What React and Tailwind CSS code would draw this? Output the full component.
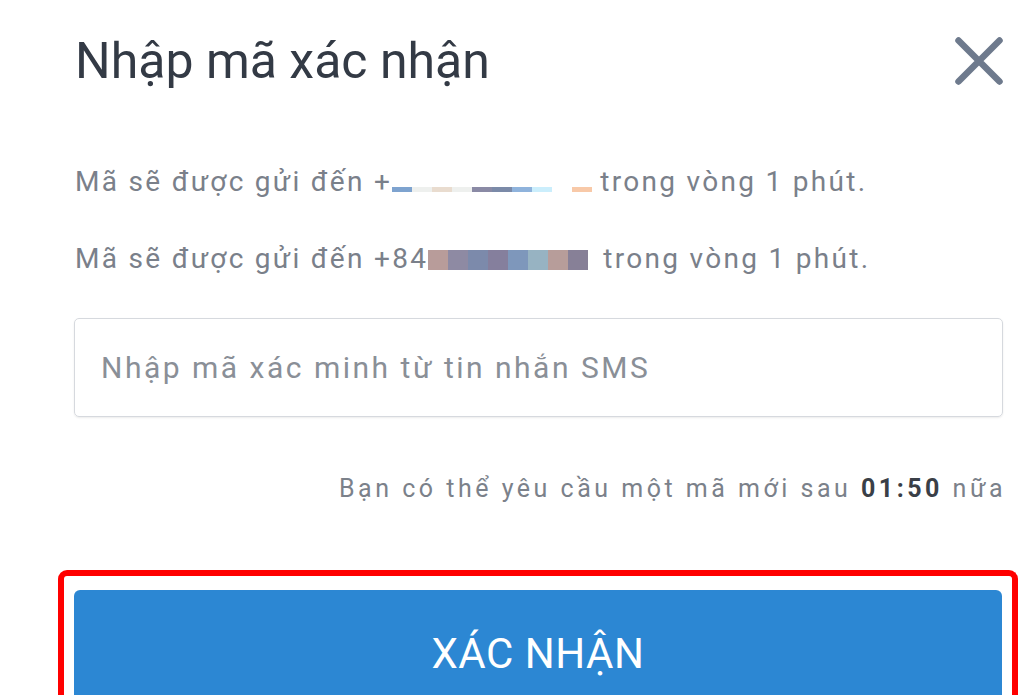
import React from 'react';

const font = { fontFamily: 'Roboto, "Noto Sans", sans-serif' };

// blurred phone digits, as in the screenshot
const thinBars = ['#7ea3cf', '#eef0ee', '#e9dccf', '#eef0ee', '#8a8aa5', '#7b8aa8', '#8fb3dc', '#cbeefc', '#ffffff', '#f8c9a8'];
const blockBars = ['#b89c9a', '#8e8aa3', '#7c8aab', '#857f9d', '#7e97bb', '#97b3c2', '#b79d9a', '#878097'];

export default function App() {
  return (
    <div className="w-[1024px] h-[695px] overflow-hidden bg-white text-[#333]" style={font}>
      {/* Header */}
      <div className="flex items-start justify-between pl-[75px] pr-[21px] pt-[29px]">
        <h1 className="text-[50px] leading-[64px] text-[#333a45]">Nhập mã xác nhận</h1>
        <button className="mt-[8px] text-[#6e7a8d]">
          <svg className="w-[48px] h-[48px] block" viewBox="0 0 48 48" fill="none" stroke="currentColor" strokeWidth={6.5} strokeLinecap="round">
            <path d="M3.5 3.5l41 41M44.5 3.5l-41 41" />
          </svg>
        </button>
      </div>

      {/* Info lines */}
      <div className="pl-[75px] pt-[75px] text-[28px] tracking-[2.3px] text-[#7a808a]">
        <p className="leading-[28px] flex items-end whitespace-nowrap">
          <span>Mã sẽ được gửi đến +</span>
          <span className="flex mb-[4px] mr-[8px]">
            {thinBars.map((c, i) => (
              <span key={i} className="w-[20px] h-[5px]" style={{ backgroundColor: c }} />
            ))}
          </span>
          <span>trong vòng 1 phút.</span>
        </p>
        <p className="leading-[28px] flex items-end mt-[49px] whitespace-nowrap">
          <span>Mã sẽ được gửi đến +84</span>
          <span className="flex mb-[3px] mr-[15px]">
            {blockBars.map((c, i) => (
              <span key={i} className="w-[20px] h-[20px]" style={{ backgroundColor: c }} />
            ))}
          </span>
          <span>trong vòng 1 phút.</span>
        </p>
      </div>

      {/* Code input */}
      <div className="pl-[74px] pr-[21px] pt-[45px]">
        <input
          type="text"
          placeholder="Nhập mã xác minh từ tin nhắn SMS"
          className="w-full h-[99px] rounded-[5px] border border-[#d6d9de] px-[26px] text-[30px] tracking-[2.5px] text-[#333] placeholder:text-[#8a8f97] outline-none shadow-[0_1px_2px_rgba(0,0,0,0.08)]"
          style={font}
        />
      </div>

      {/* Timer */}
      <p className="pr-[18px] pt-[56px] text-right text-[25px] leading-[32px] tracking-[3.5px] text-[#7b818a] whitespace-nowrap">
        Bạn có thể yêu cầu một mã mới sau <b className="font-bold text-[#3a3f47]">01:50</b> nữa
      </p>

      {/* Confirm button (highlighted) */}
      <div className="ml-[58px] mr-[6px] mt-[65px] border-[6px] border-b-0 border-[#ff0000] rounded-t-[9px] px-[10px] pt-[14px] h-[140px]">
        <button className="w-full h-[130px] pt-[43px] flex items-start justify-center rounded-[6px] bg-[#2c87d3] text-white text-[42px] leading-[42px] tracking-[0.5px]">
          XÁC NHẬN
        </button>
      </div>
    </div>
  );
}
